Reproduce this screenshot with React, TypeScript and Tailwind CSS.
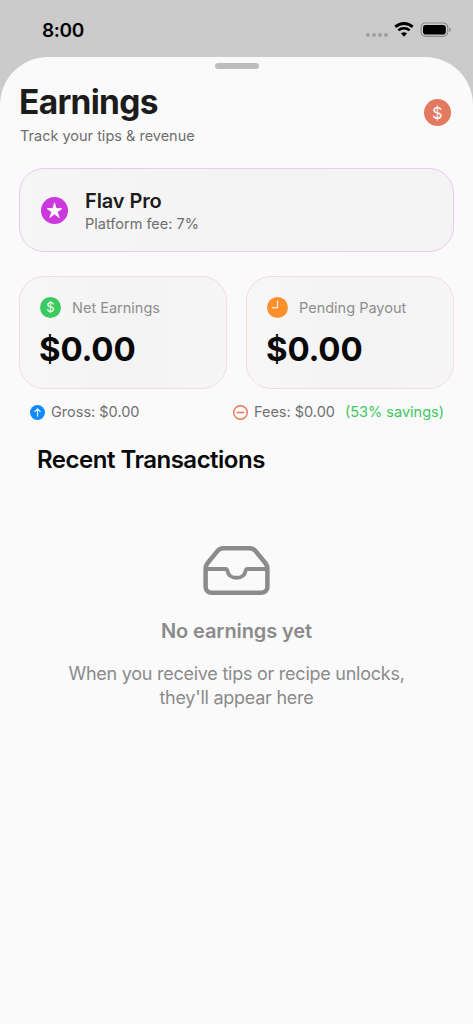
import type { ReactNode } from "react";

function Dollar({ className }: { className: string }) {
  return (
    <span
      className={`flex shrink-0 items-center justify-center rounded-full leading-none text-white ${className}`}
    >
      $
    </span>
  );
}

function StatusBar() {
  return (
    <div className="flex h-[57px] items-start justify-between pl-[42px] pr-[21px] text-black">
      <div className="mt-[19px] text-[19px] leading-6 font-semibold tracking-[-0.3px]">8:00</div>
      <div className="mt-[21px] flex items-start">
        <div className="mt-[12px] flex gap-[2px]">
          <span className="size-1 rounded-full bg-[#a0a0a0]" />
          <span className="size-1 rounded-full bg-[#a0a0a0]" />
          <span className="size-1 rounded-full bg-[#a0a0a0]" />
          <span className="size-1 rounded-full bg-[#a0a0a0]" />
        </div>
        <svg className="ml-1.5" width="20" height="16" viewBox="0 0 20 16" fill="none">
          <path d="M1.3 5.9C6.2 1.3 13.8 1.3 18.7 5.9" stroke="black" strokeWidth="2.9" />
          <path d="M4.4 9.4C7.5 6.6 12.5 6.6 15.6 9.4" stroke="black" strokeWidth="2.6" />
          <path d="M7.2 12.5C8.8 11.1 11.2 11.1 12.8 12.5L10 15.4Z" fill="black" stroke="black" strokeWidth="0.4" />
        </svg>
        <svg className="ml-1.5" width="32" height="17" viewBox="0 0 32 17" fill="none">
          <rect x="1.1" y="2" width="26.6" height="13.4" rx="4.3" stroke="#8c8c8c" strokeWidth="1.2" />
          <rect x="3" y="3.9" width="22.8" height="9.7" rx="2.8" fill="black" />
          <path d="M29.2 6.5C31.4 7.4 31.4 10 29.2 10.9Z" fill="#8c8c8c" />
        </svg>
      </div>
    </div>
  );
}

function StatCard({ icon, label, value }: { icon: ReactNode; label: string; value: string }) {
  return (
    <div className="h-[113px] flex-1 rounded-[25px] border border-[#f3deda] bg-linear-to-r from-[#f7f7f7] via-[#f3f3f3] to-[#f6f6f6] pl-5 pt-5">
      <div className="flex h-[21px] items-center gap-[11px]">
        {icon}
        <span className="text-[14.5px] leading-5 text-[#8e8e8e]">{label}</span>
      </div>
      <div className="-ml-px mt-[11px] text-[33px] leading-10 font-bold tracking-[-0.2px] text-[#090909]">
        {value}
      </div>
    </div>
  );
}

export default function App() {
  return (
    <div className="h-[1024px] w-[473px] overflow-hidden bg-[#cbcbcb] font-['Inter',sans-serif]">
      <StatusBar />
      <div className="flex h-[967px] flex-col rounded-t-[48px] bg-[#fafafa]">
        <div className="mx-auto mt-1.5 h-1.5 w-11 shrink-0 rounded-full bg-[#bdbdbd]" />

        <div className="flex h-[99px] shrink-0 justify-between pl-[19px] pr-[22px]">
          <div>
            <h1 className="mt-[13px] text-[33.5px] leading-10 font-bold tracking-[-0.7px] text-[#1c1c1c]">
              Earnings
            </h1>
            <p className="ml-px mt-1 text-[14.5px] leading-5 text-[#6e6e6e]">
              Track your tips &amp; revenue
            </p>
          </div>
          <Dollar className="mt-[30px] size-[27px] bg-[#e5795f] text-[16px]" />
        </div>

        <div className="mx-[19px] flex h-[84px] shrink-0 items-center rounded-[25px] border border-[#edc7f3] bg-linear-to-r from-[#f6f6f6] via-[#f3f3f3] to-[#f4f4f4] pl-[21px]">
          <svg width="27" height="27" viewBox="0 0 27 27">
            <circle cx="13.5" cy="13.5" r="13.5" fill="#cd37de" />
            <path
              d="M13.5 5.8L15.1 11.5L20.9 11.6L16.2 14.9L18.2 20.6L13.5 17L8.8 20.6L10.8 14.9L6.1 11.6L11.9 11.5Z"
              fill="white"
              stroke="white"
              strokeWidth="0.8"
              strokeLinejoin="round"
            />
          </svg>
          <div className="ml-[17px] pt-[3px]">
            <div className="text-[20px] leading-6 font-semibold tracking-[-0.1px] text-[#1c1c1c]">Flav Pro</div>
            <div className="text-[14.5px] leading-[22px] text-[#6e6e6e]">Platform fee: 7%</div>
          </div>
        </div>

        <div className="mx-[19px] mt-6 flex shrink-0 gap-[19px]">
          <StatCard
            icon={<Dollar className="size-[21px] bg-[#3bca5f] text-[13px]" />}
            label="Net Earnings"
            value="$0.00"
          />
          <StatCard
            icon={
              <svg width="21" height="21" viewBox="0 0 21 21" fill="none">
                <circle cx="10.5" cy="10.5" r="10.5" fill="#ff8f2c" />
                <path d="M10.5 4V10.8H5.3" stroke="white" strokeWidth="1.1" strokeLinecap="round" strokeLinejoin="round" />
              </svg>
            }
            label="Pending Payout"
            value="$0.00"
          />
        </div>

        <div className="mt-[13px] flex h-5 shrink-0 items-center justify-between pl-[30px] pr-[29px] text-[14.5px] text-[#707070]">
          <div className="flex items-center gap-1.5">
            <svg width="15" height="15" viewBox="0 0 15 15" fill="none">
              <circle cx="7.5" cy="7.5" r="7.5" fill="#0d8bff" />
              <path d="M7.5 11.3V4M4.8 6.6L7.5 3.9L10.2 6.6" stroke="white" strokeWidth="1.1" strokeLinecap="round" strokeLinejoin="round" />
            </svg>
            <span>Gross: $0.00</span>
          </div>
          <div className="flex items-center">
            <svg className="mr-1.5" width="15" height="15" viewBox="0 0 15 15" fill="none" stroke="#ec7558">
              <circle cx="7.5" cy="7.5" r="6.8" strokeWidth="1.4" />
              <path d="M4.3 7.5H10.7" strokeWidth="1.3" strokeLinecap="round" />
            </svg>
            <span>Fees: $0.00</span>
            <span className="ml-2.5 text-[#3bc960]">(53% savings)</span>
          </div>
        </div>

        <h2 className="ml-[37px] mt-[23px] text-[24px] leading-[30px] font-semibold tracking-[-0.5px] text-[#090909]">
          Recent Transactions
        </h2>

        <div className="flex flex-col items-center pt-[70px] text-[#8b8b8b]">
          <svg width="67" height="51" viewBox="0 0 68 52" fill="none" stroke="currentColor" strokeWidth="4.6" strokeLinejoin="round">
            <path d="M2.5 24V42.5C2.5 46.5 5 48.7 9 48.7H59C63 48.7 65.5 46.5 65.5 42.5V24C65.5 21.6 64.8 20 63.4 18.3L53.5 6.3C52 4.2 50 3.3 47.4 3.3H20.6C18 3.3 16 4.2 14.5 6.3L4.6 18.3C3.2 20 2.5 21.6 2.5 24Z" />
            <path d="M2.5 24.5H22.8C24.1 24.5 24.6 25.2 24.8 26.5C25.6 30.8 29 33.4 34 33.4S42.4 30.8 43.2 26.5C43.4 25.2 43.9 24.5 45.2 24.5H65.5" strokeWidth="3.9" />
          </svg>
          <div className="mt-[21px] text-[20px] leading-7 font-semibold tracking-[-0.1px]">No earnings yet</div>
          <p className="mt-[17px] text-center text-[18px] leading-6 tracking-[-0.25px]">
            When you receive tips or recipe unlocks,
            <br />
            they'll appear here
          </p>
        </div>
      </div>
    </div>
  );
}
